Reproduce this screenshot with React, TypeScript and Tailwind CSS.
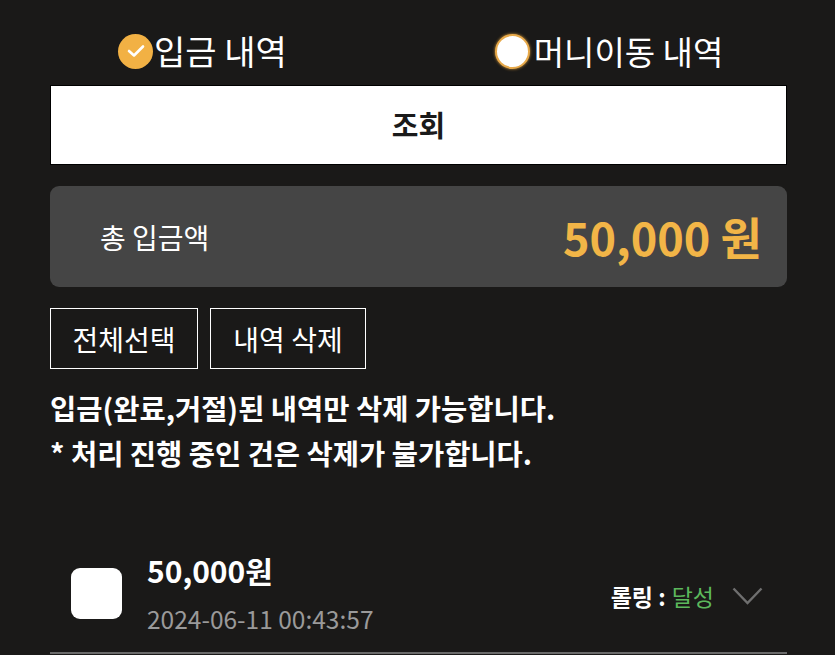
import React from "react";

const font = { fontFamily: '"Noto Sans CJK KR", "Noto Sans", sans-serif' };

const RadioTabs = () => {
  return (
    <div className="flex items-start pl-[118px] pt-[33px] h-[85px]">
      <label className="flex items-center">
        <span className="flex items-center justify-center w-[35px] h-[35px] rounded-full bg-[#f2b144]">
          <svg width="18" height="14" viewBox="0 0 18 14" fill="none">
            <path d="M2 7 L7 11.5 L16 2.5" stroke="white" strokeWidth="2.6" strokeLinecap="round" strokeLinejoin="round" />
          </svg>
        </span>
        <span className="ml-[1px] text-[34px] leading-[36px] text-white">입금 내역</span>
      </label>
      <label className="flex items-center ml-[208px]">
        <span className="w-[35px] h-[35px] rounded-full bg-white border-[2px] border-[#e7a94a] shadow-[0_0_3px_#d69a3c]" />
        <span className="ml-[4px] text-[33px] leading-[36px] text-white">머니이동 내역</span>
      </label>
    </div>
  );
};

const App = () => {
  return (
    <div className="min-h-[655px] w-full bg-[#1a1918] overflow-hidden" style={font}>
      <RadioTabs />
      <div className="pl-[50px] pr-[48px]">
        <button className="w-full h-[80px] bg-white border border-black text-[29px] font-bold text-[#1a1a1a]">
          조회
        </button>
        <div className="mt-[21px] h-[101px] rounded-[9px] bg-[#454545] flex items-center justify-between pl-[50px] pr-[25px]">
          <span className="text-[28px] text-white">총 입금액</span>
          <span className="text-[45px] font-bold text-[#f2b547]">50,000 원</span>
        </div>
        <div className="mt-[21px] flex gap-[12px]">
          <button className="w-[148px] h-[61px] border-[1.5px] border-white text-[28px] text-white">전체선택</button>
          <button className="w-[156px] h-[61px] border-[1.5px] border-white text-[28px] text-white">내역 삭제</button>
        </div>
        <div className="mt-[16px] text-[28.5px] leading-[45px] font-bold text-white">
          <p>입금(완료,거절)된 내역만 삭제 가능합니다.</p>
          <p>* 처리 진행 중인 건은 삭제가 불가합니다.</p>
        </div>
        <div className="mt-[75px] flex items-center border-b-[2px] border-[#6a6a6a] pb-[16px]">
          <div className="ml-[21px] w-[51px] h-[51px] rounded-[9px] bg-white" />
          <div className="ml-[25px] flex-1">
            <div className="text-[30px] font-bold text-white leading-[40px]">50,000원</div>
            <div className="text-[24.5px] text-[#9a9a9a] leading-[34px] mt-[12px]">2024-06-11 00:43:57</div>
          </div>
          <div className="flex items-center mr-[24px] mt-[6px]">
            <span className="text-[23px] font-bold text-white">롤링 : </span>
            <span className="ml-[6px] text-[23px] text-[#5cb85c]">달성</span>
            <svg className="ml-[18px]" width="31" height="18" viewBox="0 0 31 18" fill="none">
              <path d="M1.5 1.5 L15.5 16 L29.5 1.5" stroke="#6f6f6f" strokeWidth="2.4" />
            </svg>
          </div>
        </div>
      </div>
    </div>
  );
};

export default App;
